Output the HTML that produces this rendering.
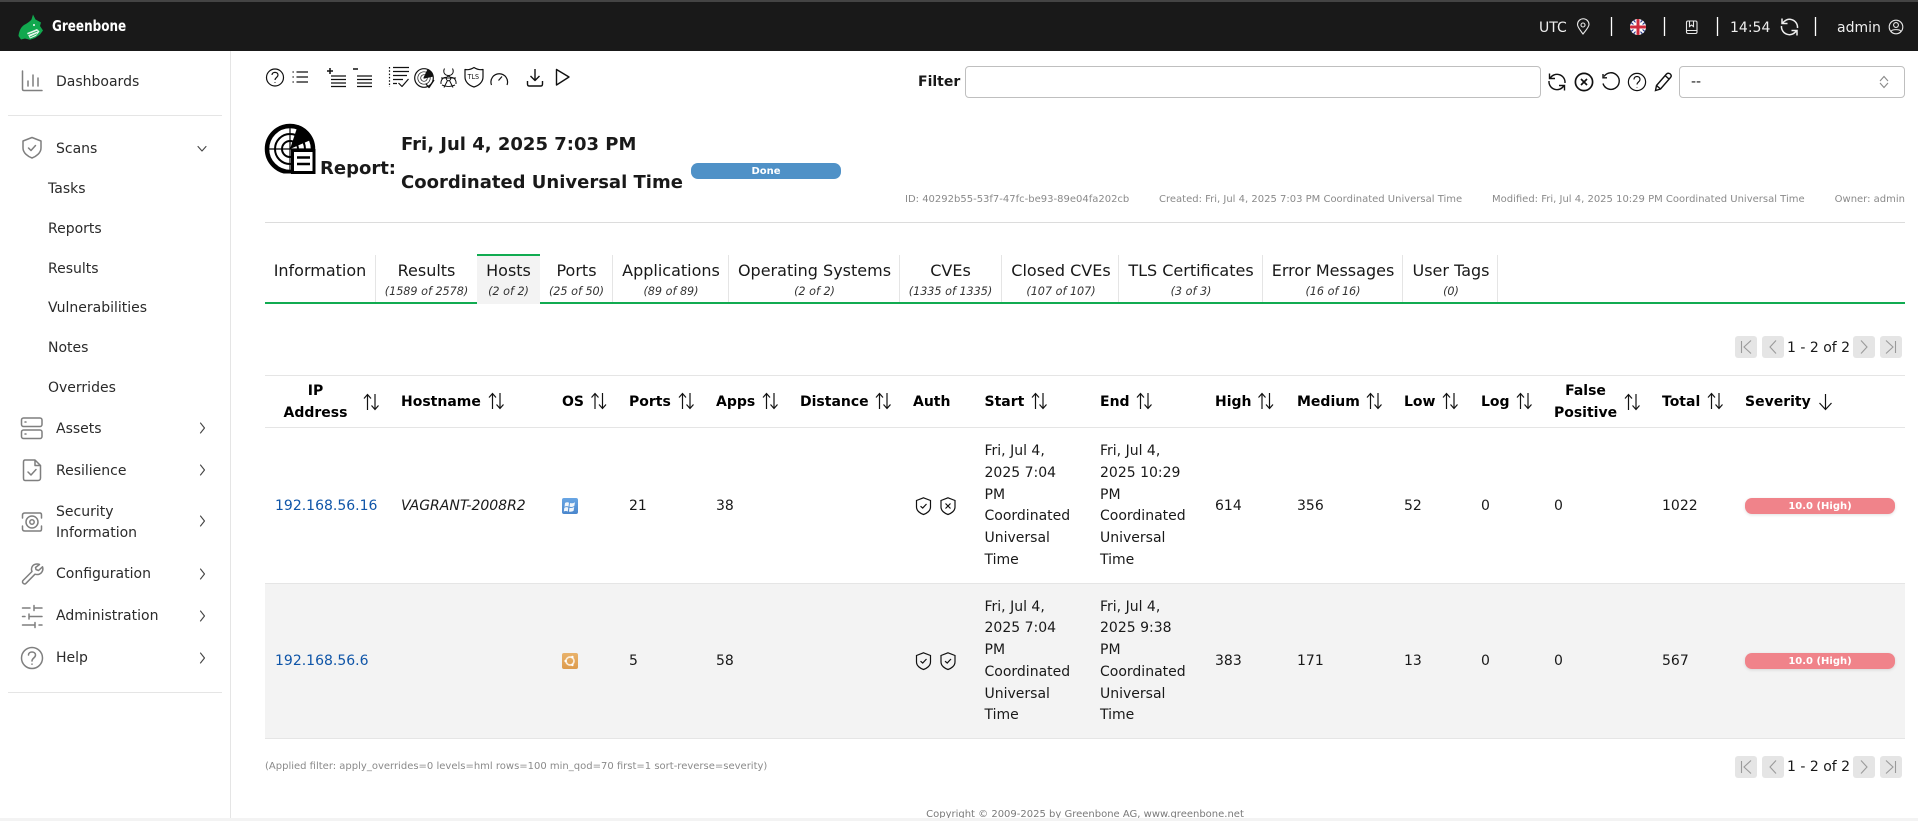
<!DOCTYPE html>
<html lang="en"><head><meta charset="utf-8"><title>Greenbone Report</title>
<style>
html,body{margin:0;padding:0;background:#fff}
body{width:1918px;height:821px;position:relative;overflow:hidden;font-family:"DejaVu Sans","Liberation Sans",sans-serif;font-size:14px;color:#191919}
.b{position:absolute}
.t{position:absolute;white-space:nowrap;line-height:20px;margin-top:1px}
.m{color:#2a2a2a}
.c{transform:translateX(-50%);text-align:center}
.h{font-weight:700;color:#000}
.tab{font-size:16px;color:#191919}
.sub{font-size:11.2px;font-style:italic;color:#333}
.g{font-size:10px;color:#8a8a8a}
.ml{position:absolute;white-space:nowrap;line-height:21.8px;color:#191919}
.hh{font-size:18px;font-weight:700;color:#191919}
.pg{position:absolute;width:22px;height:22px;background:#e5e5e5;border-radius:3px}
.bar{position:absolute;width:150px;height:16px;border-radius:7px;color:#fff;font-size:10px;font-weight:700;line-height:17px;text-align:center}
svg#i{position:absolute;left:0;top:0;z-index:2}
.l{color:#0f55a8}
</style></head><body>
<div class="b" style="left:0;top:0;width:1918px;height:51px;background:#191919"></div>
<div class="b" style="left:0;top:0;width:1918px;height:2px;background:#444"></div>
<div class="b" style="left:0;top:818px;width:1918px;height:3px;background:#f3f3f3;z-index:3"></div>
<div class="b" style="left:230px;top:51px;width:1px;height:767px;background:#e5e5e5"></div>
<div class="b" style="left:8px;top:115px;width:214px;height:1px;background:#e5e5e5"></div>
<div class="b" style="left:8px;top:692px;width:214px;height:1px;background:#e5e5e5"></div>

<div class="t" style="left:52px;top:15px;color:#fff;font-family:'DejaVu Sans Condensed','DejaVu Sans',sans-serif;font-stretch:condensed;font-weight:700;font-size:15px;transform:scaleX(.89);transform-origin:0 50%">Greenbone</div>
<div class="t" style="left:1539px;top:17px;color:#eee">UTC</div>
<div class="t" style="left:1730px;top:17px;color:#eee">14:54</div>
<div class="t" style="left:1837px;top:17px;color:#eee">admin</div>

<div class="t m" style="left:56px;top:71px">Dashboards</div>
<div class="t m" style="left:56px;top:138px">Scans</div>
<div class="t m" style="left:48px;top:178px">Tasks</div>
<div class="t m" style="left:48px;top:218px">Reports</div>
<div class="t m" style="left:48px;top:258px">Results</div>
<div class="t m" style="left:48px;top:297px">Vulnerabilities</div>
<div class="t m" style="left:48px;top:337px">Notes</div>
<div class="t m" style="left:48px;top:377px">Overrides</div>
<div class="t m" style="left:56px;top:418px">Assets</div>
<div class="t m" style="left:56px;top:460px">Resilience</div>
<div class="t m" style="left:56px;top:501px">Security</div>
<div class="t m" style="left:56px;top:522px">Information</div>
<div class="t m" style="left:56px;top:563px">Configuration</div>
<div class="t m" style="left:56px;top:605px">Administration</div>
<div class="t m" style="left:56px;top:647px">Help</div>

<div class="t h" style="left:918px;top:71px;color:#191919">Filter</div>
<div class="b" style="left:965px;top:66px;width:574px;height:30px;border:1px solid #bfbfbf;border-radius:4px"></div>
<div class="b" style="left:1679px;top:66px;width:224px;height:30px;border:1px solid #bfbfbf;border-radius:4px"></div>
<div class="t" style="left:1691px;top:71px">--</div>

<div class="t hh" style="left:320px;top:158px">Report:</div>
<div class="t hh" style="left:401px;top:134px">Fri, Jul 4, 2025 7:03 PM</div>
<div class="t hh" style="left:401px;top:172px">Coordinated Universal Time</div>
<div class="bar" style="left:691px;top:163px;background:#4f91c7">Done</div>
<div class="t g" style="left:905px;top:189px">ID: 40292b55-53f7-47fc-be93-89e04fa202cb</div>
<div class="t g" style="left:1159px;top:189px">Created: Fri, Jul 4, 2025 7:03 PM Coordinated Universal Time</div>
<div class="t g" style="left:1492px;top:189px">Modified: Fri, Jul 4, 2025 10:29 PM Coordinated Universal Time</div>
<div class="t g" style="right:13px;top:189px">Owner: admin</div>
<div class="b" style="left:265px;top:222px;width:1640px;height:1px;background:#dcdcdc"></div>

<div class="b" style="left:265px;top:302px;width:1640px;height:2px;background:#11ab51"></div>
<div class="b" style="left:477px;top:254px;width:63px;height:50px;background:#f3f3f3"></div>
<div class="b" style="left:477px;top:254px;width:63px;height:2px;background:#11ab51"></div>
<div class="b" style="left:375px;top:255px;width:1px;height:47px;background:#e5e5e5"></div>
<div class="b" style="left:612px;top:255px;width:1px;height:47px;background:#e5e5e5"></div>
<div class="b" style="left:728px;top:255px;width:1px;height:47px;background:#e5e5e5"></div>
<div class="b" style="left:899px;top:255px;width:1px;height:47px;background:#e5e5e5"></div>
<div class="b" style="left:1001px;top:255px;width:1px;height:47px;background:#e5e5e5"></div>
<div class="b" style="left:1118px;top:255px;width:1px;height:47px;background:#e5e5e5"></div>
<div class="b" style="left:1262px;top:255px;width:1px;height:47px;background:#e5e5e5"></div>
<div class="b" style="left:1402px;top:255px;width:1px;height:47px;background:#e5e5e5"></div>
<div class="b" style="left:1497px;top:255px;width:1px;height:47px;background:#e5e5e5"></div>

<div class="t tab c" style="left:320px;top:260px">Information</div>
<div class="t tab c" style="left:426.5px;top:260px">Results</div><div class="t sub c" style="left:426.5px;top:281px">(1589 of 2578)</div>
<div class="t tab c" style="left:508.5px;top:260px">Hosts</div><div class="t sub c" style="left:508.5px;top:281px">(2 of 2)</div>
<div class="t tab c" style="left:576.5px;top:260px">Ports</div><div class="t sub c" style="left:576.5px;top:281px">(25 of 50)</div>
<div class="t tab c" style="left:671px;top:260px">Applications</div><div class="t sub c" style="left:671px;top:281px">(89 of 89)</div>
<div class="t tab c" style="left:814.5px;top:260px">Operating Systems</div><div class="t sub c" style="left:814.5px;top:281px">(2 of 2)</div>
<div class="t tab c" style="left:950.5px;top:260px">CVEs</div><div class="t sub c" style="left:950.5px;top:281px">(1335 of 1335)</div>
<div class="t tab c" style="left:1061px;top:260px">Closed CVEs</div><div class="t sub c" style="left:1061px;top:281px">(107 of 107)</div>
<div class="t tab c" style="left:1191px;top:260px">TLS Certificates</div><div class="t sub c" style="left:1191px;top:281px">(3 of 3)</div>
<div class="t tab c" style="left:1333px;top:260px">Error Messages</div><div class="t sub c" style="left:1333px;top:281px">(16 of 16)</div>
<div class="t tab c" style="left:1451px;top:260px">User Tags</div><div class="t sub c" style="left:1451px;top:281px">(0)</div>

<div class="pg" style="left:1735px;top:336px"></div><div class="pg" style="left:1762px;top:336px"></div>
<div class="pg" style="left:1853px;top:336px"></div><div class="pg" style="left:1880px;top:336px"></div>
<div class="t" style="left:1787px;top:337px">1 - 2 of 2</div>
<div class="pg" style="left:1735px;top:756px"></div><div class="pg" style="left:1762px;top:756px"></div>
<div class="pg" style="left:1853px;top:756px"></div><div class="pg" style="left:1880px;top:756px"></div>
<div class="t" style="left:1787px;top:756px">1 - 2 of 2</div>

<div class="b" style="left:265px;top:375px;width:1640px;height:1px;background:#e5e5e5"></div>
<div class="b" style="left:265px;top:427px;width:1640px;height:1px;background:#e5e5e5"></div>
<div class="b" style="left:265px;top:583px;width:1640px;height:156px;background:#f3f3f3;border-top:1px solid #e5e5e5;border-bottom:1px solid #e5e5e5;box-sizing:border-box"></div>

<div class="t h c" style="left:315.5px;top:379px;line-height:22px">IP<br>Address</div>
<div class="t h" style="left:401px;top:391px">Hostname</div>
<div class="t h" style="left:562px;top:391px">OS</div>
<div class="t h" style="left:629px;top:391px">Ports</div>
<div class="t h" style="left:716px;top:391px">Apps</div>
<div class="t h" style="left:800px;top:391px">Distance</div>
<div class="t h" style="left:913px;top:391px">Auth</div>
<div class="t h" style="left:984.5px;top:391px">Start</div>
<div class="t h" style="left:1100px;top:391px">End</div>
<div class="t h" style="left:1215px;top:391px">High</div>
<div class="t h" style="left:1297px;top:391px">Medium</div>
<div class="t h" style="left:1404px;top:391px">Low</div>
<div class="t h" style="left:1481px;top:391px">Log</div>
<div class="t h c" style="left:1585.5px;top:379px;line-height:22px">False<br>Positive</div>
<div class="t h" style="left:1662px;top:391px">Total</div>
<div class="t h" style="left:1745px;top:391px">Severity</div>

<div class="t l" style="left:275px;top:495px">192.168.56.16</div>
<div class="t" style="left:401px;top:495px;font-style:italic">VAGRANT-2008R2</div>
<div class="t" style="left:629px;top:495px">21</div>
<div class="t" style="left:716px;top:495px">38</div>
<div class="ml" style="left:984.5px;top:441px">Fri, Jul 4,<br>2025 7:04<br>PM<br>Coordinated<br>Universal<br>Time</div>
<div class="ml" style="left:1100px;top:441px">Fri, Jul 4,<br>2025 10:29<br>PM<br>Coordinated<br>Universal<br>Time</div>
<div class="t" style="left:1215px;top:495px">614</div>
<div class="t" style="left:1297px;top:495px">356</div>
<div class="t" style="left:1404px;top:495px">52</div>
<div class="t" style="left:1481px;top:495px">0</div>
<div class="t" style="left:1554px;top:495px">0</div>
<div class="t" style="left:1662px;top:495px">1022</div>
<div class="bar" style="left:1745px;top:498px;background:#f0838a;box-shadow:0 1px 3px rgba(0,0,0,.12)">10.0 (High)</div>

<div class="t l" style="left:275px;top:650px">192.168.56.6</div>
<div class="t" style="left:629px;top:650px">5</div>
<div class="t" style="left:716px;top:650px">58</div>
<div class="ml" style="left:984.5px;top:596.5px">Fri, Jul 4,<br>2025 7:04<br>PM<br>Coordinated<br>Universal<br>Time</div>
<div class="ml" style="left:1100px;top:596.5px">Fri, Jul 4,<br>2025 9:38<br>PM<br>Coordinated<br>Universal<br>Time</div>
<div class="t" style="left:1215px;top:650px">383</div>
<div class="t" style="left:1297px;top:650px">171</div>
<div class="t" style="left:1404px;top:650px">13</div>
<div class="t" style="left:1481px;top:650px">0</div>
<div class="t" style="left:1554px;top:650px">0</div>
<div class="t" style="left:1662px;top:650px">567</div>
<div class="bar" style="left:1745px;top:653px;background:#f0838a;box-shadow:0 1px 3px rgba(0,0,0,.12)">10.0 (High)</div>

<div class="t g" style="left:265px;top:756px">(Applied filter: apply_overrides=0 levels=hml rows=100 min_qod=70 first=1 sort-reverse=severity)</div>
<div class="t g c" style="left:1085px;top:804px;color:#7a7a7a">Copyright © 2009-2025 by Greenbone AG, www.greenbone.net</div>

<svg id="i" width="1918" height="821" viewBox="0 0 1918 821" fill="none">
<defs>
<symbol id="sa" viewBox="0 0 17 18" overflow="visible"><path d="M5 17V1.5M1.5 5.5L5 1.5L8.5 5.5M12.5 1V16.5M9 12.5L12.5 16.5L16 12.5" stroke="#111" stroke-width="1.2" fill="none"/></symbol>
<symbol id="shc" viewBox="0 0 16 18" overflow="visible"><path d="M8 .8L15 3.5V10C15 14 11 16.5 8 17.5C5 16.5 1 14 1 10V3.5Z" stroke="#111" stroke-width="1.2" fill="none"/><path d="M5 9.2L7.2 11L11 7" stroke="#111" stroke-width="1.2" fill="none"/></symbol>
<symbol id="shx" viewBox="0 0 16 18" overflow="visible"><path d="M8 .8L15 3.5V10C15 14 11 16.5 8 17.5C5 16.5 1 14 1 10V3.5Z" stroke="#111" stroke-width="1.2" fill="none"/><path d="M5.5 6.5L10.5 11.5M10.5 6.5L5.5 11.5" stroke="#111" stroke-width="1.2" fill="none"/></symbol>
<symbol id="pg1" viewBox="0 0 22 22"><path d="M6.5 5V17M16 4.5L9 11L16 17.5" stroke="#9a9a9a" stroke-width="1.1" fill="none"/></symbol>
<symbol id="pg2" viewBox="0 0 22 22"><path d="M14 4.5L8 11L14 17.5" stroke="#9a9a9a" stroke-width="1.1" fill="none"/></symbol>
<symbol id="pg3" viewBox="0 0 22 22"><path d="M8 4.5L14 11L8 17.5" stroke="#9a9a9a" stroke-width="1.1" fill="none"/></symbol>
<symbol id="pg4" viewBox="0 0 22 22"><path d="M15.5 5V17M6 4.5L13 11L6 17.5" stroke="#9a9a9a" stroke-width="1.1" fill="none"/></symbol>
<clipPath id="fc"><circle cx="1638" cy="27" r="8"/></clipPath>
<clipPath id="rc"><rect x="264" y="123" width="52" height="50.5"/></clipPath>
<linearGradient id="wg" x1="0" y1="0" x2="0" y2="1"><stop offset="0" stop-color="#69a6e4"/><stop offset="1" stop-color="#4a86cc"/></linearGradient>
<linearGradient id="ug" x1="0" y1="0" x2="0" y2="1"><stop offset="0" stop-color="#e9b26a"/><stop offset="1" stop-color="#dd9b4c"/></linearGradient>
</defs>

<!-- logo -->
<path d="M18.5 36C19 31 21 27 24 25C27 23.5 30.5 21 31.5 19.5L33 14.5L35.5 19.5L36.5 20L41 22.5L40 26L43 30.5L40 34.5L35 38L30 39.7L25 38.5L21 39.5Z" fill="#11a84e"/>
<path d="M27 33L37 29L39.5 31.5L36 36L30 38.5Z" fill="#e8f5ec"/><path d="M28 34.7L37.5 31M30 37L37 33.7" stroke="#11a84e" stroke-width=".8"/>
<circle cx="34" cy="25" r="1" fill="#fff"/>

<!-- top right -->
<g stroke="#e8e8e8" stroke-width="1.1">
<path d="M1583 34C1580 30 1577.5 27 1577.5 24.5A5.7 5.7 0 0 1 1589 24.5C1589 27 1586 30 1583 34Z"/><circle cx="1583" cy="25" r="2"/>
<rect x="1686.5" y="21" width="10.5" height="12.5" rx="1.5"/><path d="M1686.5 30.5H1697M1689.5 21V26.5L1691.5 25L1693.5 26.5V21"/>
<circle cx="1896" cy="27" r="6.8"/><circle cx="1896" cy="25" r="2.4"/><path d="M1891 31.5C1892 29 1900 29 1901 31.5"/>
</g>
<g stroke="#fff" stroke-width="1.3"><path d="M1611.5 17V36M1664.5 17V36M1717.5 17V36M1815.5 17V36"/></g>
<g stroke="#eee" stroke-width="1.5" fill="none"><path d="M1782.5 23.5A8 8 0 0 1 1797.5 28M1796.5 30.5A8 8 0 0 1 1781.5 26M1782 18.5V23.5H1787.5M1797 35.5V30.5H1791.5"/></g>
<g clip-path="url(#fc)"><rect x="1629" y="18" width="18" height="18" fill="#e9e9ef"/><path d="M1630 19L1646 35M1646 19L1630 35" stroke="#28388a" stroke-width="4.5"/><path d="M1630 19L1646 35M1646 19L1630 35" stroke="#fff" stroke-width="2"/><path d="M1638 18V36M1629 27H1647" stroke="#fff" stroke-width="5"/><path d="M1638 18V36M1629 27H1647" stroke="#cf2b3c" stroke-width="3"/></g>

<!-- sidebar icons -->
<g stroke="#7f7f7f" stroke-width="1.5" stroke-linecap="round" stroke-linejoin="round">
<path d="M22.5 71V89C22.5 90 23 90.5 24 90.5H42"/><path d="M28 81V86M33 75V86M38 78V86"/>
<path d="M32 137.5L41 141V148C41 153 36 156.5 32 158C28 156.5 23 153 23 148V141Z"/><path d="M28.5 148L31 150.5L35.5 145.5"/>
<rect x="21.5" y="418" width="20.5" height="8.5" rx="2"/><rect x="21.5" y="430" width="20.5" height="8.5" rx="2"/><path d="M25 422H26M25 434H26"/>
<path d="M25 460H35L40.5 465.5V478C40.5 479.5 39.5 480.5 38 480.5H25C24 480.5 23.5 479.5 23.5 478V462C23.5 461 24 460 25 460ZM35 460V465.5H40.5"/><path d="M28 472L31 475L36 469.5"/>
<path d="M22.5 518V515C22.5 513.5 23.5 513 25 513H40C41 513 41.5 513.5 41.5 515V518M22.5 526V529C22.5 530.5 23.5 531 25 531H40C41 531 41.5 530.5 41.5 529V526"/><circle cx="32" cy="522" r="6"/><circle cx="32" cy="522" r="2.2"/>
<path d="M39.5 564.5C36.5 563.2 33 564.5 32 567C31.2 569 31.5 570.5 32 571.5L23 580.5C22 581.7 22.5 583 23.5 583.5C24.5 584.2 25.5 584 26 583.3L35 574.2C38 575.2 41 574 42.3 571.3C43 569.8 43 568 42.5 566.8L38.5 570.5L36 569.5L35.5 567.5Z"/>
<path d="M22.5 608H30M34 608H42M34 605.5V610.5M22.5 616.5H25M29 616.5H42M29 614V619M22.5 625H35M39 625H42M35 622.5V627.5"/>
<circle cx="32" cy="658" r="10.5"/><path d="M28.5 655C28.5 651 35.5 651 35.5 655C35.5 658 32 658 32 661"/><path d="M32 664V664.3"/>
<path d="M198 146.5L202 151L206 146.5" stroke="#444" stroke-width="1.1"/>
<path d="M200.5 423L204.5 428L200.5 433M200.5 465L204.5 470L200.5 475M200.5 516L204.5 521L200.5 526M200.5 569L204.5 574L200.5 579M200.5 611L204.5 616L200.5 621M200.5 653L204.5 658L200.5 663" stroke="#444" stroke-width="1.1"/>
</g>

<!-- toolbar -->
<g stroke="#111" stroke-width="1.2" stroke-linejoin="round">
<circle cx="275" cy="77.5" r="8.5"/><path d="M272 75C272 71.5 278 71.5 278 75C278 77.5 275 77.5 275 80M275 82.3V83"/>
<path d="M296.5 72H308M296.5 77H308M296.5 82H308M292.5 72H293.8M292.5 77H293.8M292.5 82H293.8"/>
<path d="M327 71H333M330 68V74" stroke-width="1.5"/><path d="M331 76H346M331 79.5H346M331 83H346M331 86.5H346" stroke-width="1.3"/>
<path d="M353 69H358" stroke-width="1.5"/><path d="M357 76H372M357 79.5H372M357 83H372M357 86.5H372" stroke-width="1.3"/>
<path d="M389.5 67V87" stroke-dasharray="1.5 1.8"/><path d="M393 67.5H409M393 71.5H409M393 75.5H407M393 79.5H403M393 83.5H397M398.5 83L402 86.5L408.5 79"/>
<circle cx="424" cy="78" r="9.3"/><circle cx="424" cy="78" r="6.2" stroke-width=".7"/><circle cx="424" cy="78" r="3.3" stroke-width=".7"/><path d="M424 78L428 69.5A9 9 0 0 1 433 76Z" fill="#111"/><path d="M426 84L429 87.5L434 80" stroke-width="1.3"/>
<circle cx="448.5" cy="78.5" r="2.2" stroke-width="1"/><path d="M444.5 68.5C442.5 72.5 445 75.5 448.5 75.5C452 75.5 454.5 72.5 452.5 68.5M441 84C440.5 79.5 443.5 77 446.5 77.5M456 84C456.5 79.5 453.5 77 450.5 77.5M441 78H456M444 87.5L447.5 80.5M453 87.5L449.5 80.5M442 85C446 87 451 87 455 85" stroke-width="1"/>
<path d="M474 67.5C477 69.5 480 70 483 69.5V77C483 82 479 85.5 474 87C469 85.5 465 82 465 77V69.5C468 70 471 69.5 474 67.5Z"/>
<path d="M491.5 85A8.3 8.3 0 1 1 507 85M498.5 80.5L502 76.5"/>
<path d="M535 69V80M530.5 76L535 80.5L539.5 76M527.5 81V84C527.5 85 528 86 529 86H541C542 86 542.5 85 542.5 84V81" stroke-width="1.4"/>
<path d="M556.5 69.5L569 77L556.5 85Z" stroke-width="1.4"/>
</g>

<!-- report icon -->
<g clip-path="url(#rc)">
<circle cx="290" cy="149" r="23" stroke="#000" stroke-width="4.5"/>
<circle cx="290" cy="149" r="15" stroke="#000" stroke-width="2"/>
<circle cx="290" cy="149" r="8" stroke="#000" stroke-width="2"/>
<path d="M265 149H315M290 124V174" stroke="#000" stroke-width="1.2"/>
<path d="M290 149L298 125A25 25 0 0 1 313 139Z" fill="#000"/>
</g>
<rect x="292.5" y="150.5" width="21.5" height="22" fill="#fff" stroke="#000" stroke-width="3"/>
<path d="M297 157.5H310M297 164H310" stroke="#000" stroke-width="2.6"/>

<!-- filter icons -->
<g stroke="#111" stroke-width="1.4">
<path d="M1550 78.5A8 8 0 0 1 1565 83M1564 85.5A8 8 0 0 1 1549 81M1549.5 73.5V78.5H1555M1564.5 90.5V85.5H1559"/>
<circle cx="1584" cy="82" r="8.6" stroke-width="1.7"/><path d="M1581 79L1587 85M1587 79L1581 85" stroke-width="1.7"/>
<path d="M1604 76.5A8.3 8.3 0 1 1 1603 83.5M1603 74V77.8H1607"/>
<circle cx="1637" cy="82" r="8.6" stroke-width="1.2"/><path d="M1634 79.5C1634 75.5 1640 75.5 1640 79.5C1640 82 1637 82 1637 84.5M1637 87V87.5" stroke-width="1.2"/>
<path d="M1655.5 90.5L1656.5 85.5L1666.5 74C1668 72.5 1670.5 73.5 1671 75C1671.5 76 1671 77 1670.5 77.5L1660.5 89ZM1656.5 85.5L1660.5 89M1665 75.5L1669 79"/>
</g>
<path d="M1880 81L1884 76.5L1888 81M1880 83L1884 87.5L1888 83" stroke="#8a8a8a" stroke-width="1.1"/>

<!-- pagination -->
<use href="#pg1" x="1735" y="336" width="22" height="22"/><use href="#pg2" x="1762" y="336" width="22" height="22"/><use href="#pg3" x="1853" y="336" width="22" height="22"/><use href="#pg4" x="1880" y="336" width="22" height="22"/>
<use href="#pg1" x="1735" y="756" width="22" height="22"/><use href="#pg2" x="1762" y="756" width="22" height="22"/><use href="#pg3" x="1853" y="756" width="22" height="22"/><use href="#pg4" x="1880" y="756" width="22" height="22"/>

<!-- sort arrows -->
<use href="#sa" x="362.5" y="393" width="17" height="18"/>
<use href="#sa" x="487.5" y="392" width="17" height="18"/>
<use href="#sa" x="590" y="392" width="17" height="18"/>
<use href="#sa" x="677.5" y="392" width="17" height="18"/>
<use href="#sa" x="761.5" y="392" width="17" height="18"/>
<use href="#sa" x="874.5" y="392" width="17" height="18"/>
<use href="#sa" x="1030.5" y="392" width="17" height="18"/>
<use href="#sa" x="1135.5" y="392" width="17" height="18"/>
<use href="#sa" x="1257" y="392" width="17" height="18"/>
<use href="#sa" x="1365.5" y="392" width="17" height="18"/>
<use href="#sa" x="1441.5" y="392" width="17" height="18"/>
<use href="#sa" x="1515.5" y="392" width="17" height="18"/>
<use href="#sa" x="1623.5" y="393" width="17" height="18"/>
<use href="#sa" x="1706.5" y="392" width="17" height="18"/>
<path d="M1825.5 394V409M1819.5 403L1825.5 409.5L1831.5 403" stroke="#111" stroke-width="1.2"/>

<!-- os icons -->
<rect x="562" y="498" width="16" height="16" rx="2" fill="url(#wg)"/>
<path d="M565 503C566.5 502 568 502 569 502.8L568.5 506.6C567.5 506 566 506 564.5 506.8ZM570 503C571.5 503.6 573.2 503.3 575 502.2L574.3 506C572.7 507 571 507.2 569.5 506.6ZM564.3 507.7C565.8 507 567.2 507 568.3 507.6L567.8 511.6C566.6 510.9 565.3 510.9 563.8 511.5ZM569.4 507.7C571 508.2 572.5 508 574.2 507L573.6 510.8C572 511.8 570.5 512 569 511.6Z" fill="#f1f6fb"/>
<rect x="562" y="653" width="16" height="16" rx="2" fill="url(#ug)"/>
<circle cx="570" cy="661" r="4" stroke="#fbeedd" stroke-width="1.7"/><circle cx="565.6" cy="661" r="1.2" fill="#fff"/><circle cx="572.4" cy="657" r="1.2" fill="#fff"/><circle cx="572.4" cy="665" r="1.2" fill="#fff"/>

<!-- auth -->
<use href="#shc" x="915.5" y="497" width="16" height="18"/><use href="#shx" x="940" y="497" width="16" height="18"/>
<use href="#shc" x="915.5" y="652" width="16" height="18"/><use href="#shc" x="940" y="652" width="16" height="18"/>
</svg>
<div class="t" style="left:467px;top:71px;font:7px/10px 'DejaVu Sans',sans-serif;z-index:3;color:#111;transform:scaleX(.9)">TLS</div>
</body></html>
